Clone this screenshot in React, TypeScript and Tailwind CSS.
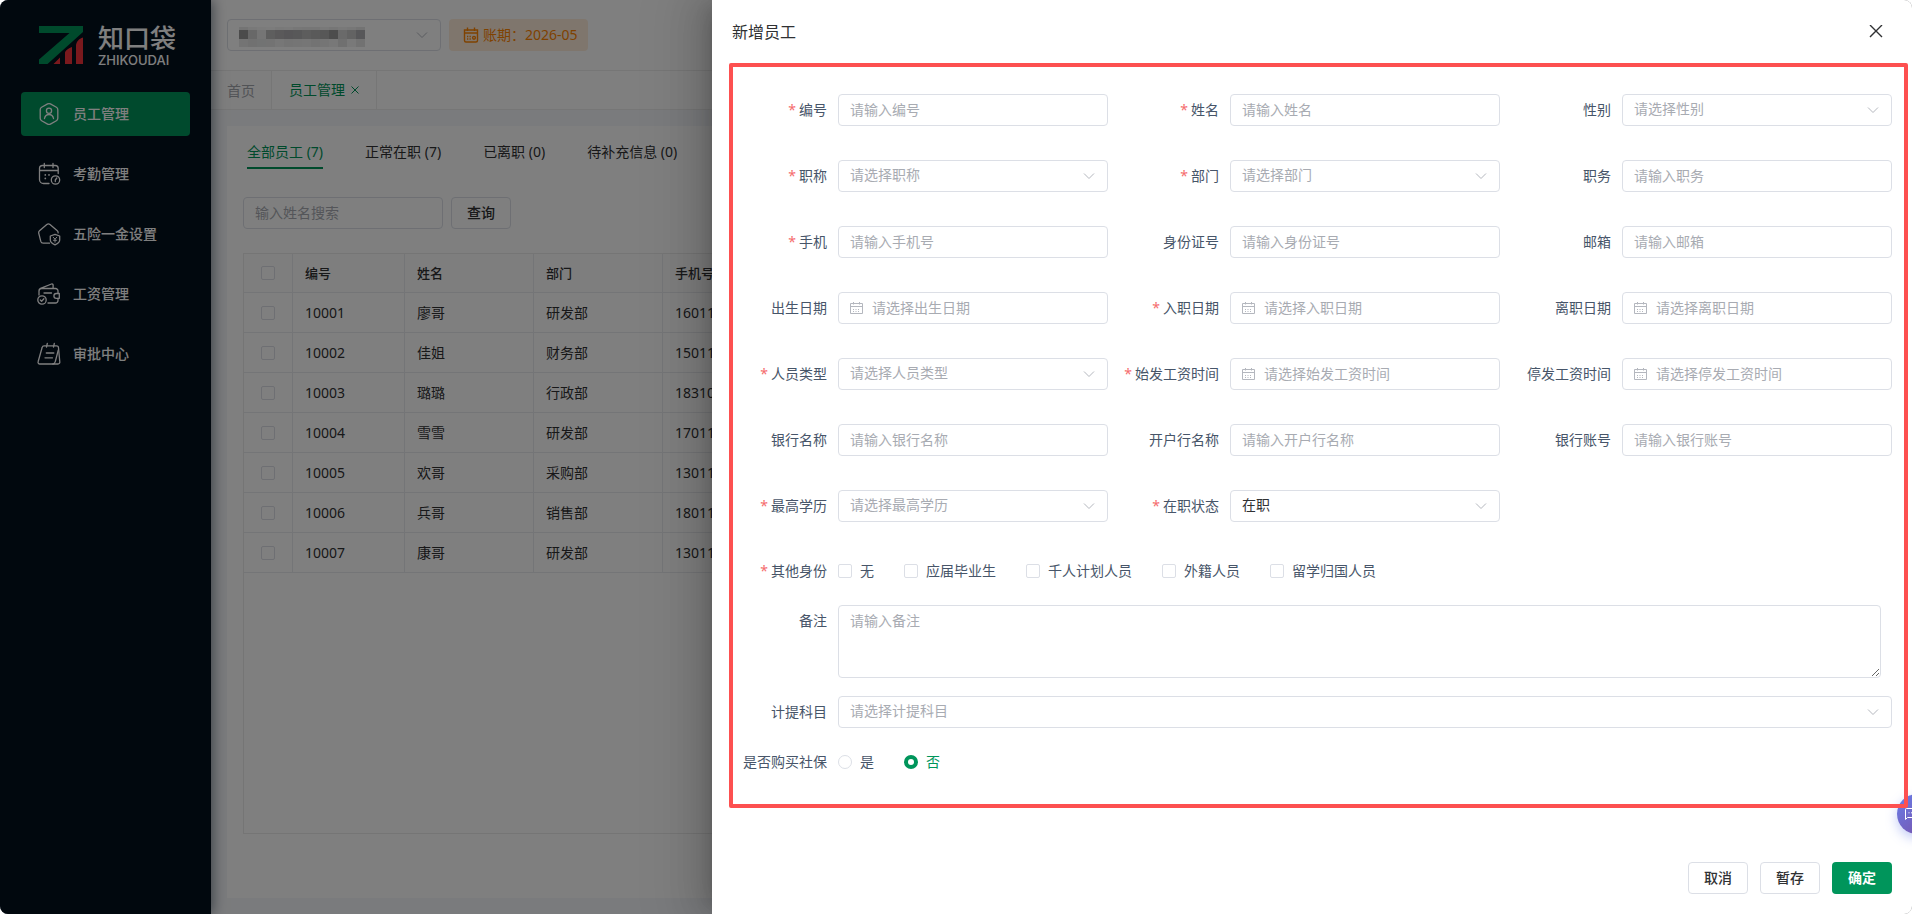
import { FC, ReactNode } from 'react';

type FieldProps = {
  id: string;
  label: string;
  type?: 'text' | 'select' | 'date';
  required?: boolean;
  placeholder?: string;
  value?: string;
};

const fields: FieldProps[] = [
  { id: 'code', label: '编号', required: true, placeholder: '请输入编号' },
  { id: 'name', label: '姓名', required: true, placeholder: '请输入姓名' },
  { id: 'gender', label: '性别', type: 'select', placeholder: '请选择性别' },
  { id: 'title', label: '职称', type: 'select', required: true, placeholder: '请选择职称' },
  { id: 'dept', label: '部门', type: 'select', required: true, placeholder: '请选择部门' },
  { id: 'duty', label: '职务', placeholder: '请输入职务' },
  { id: 'phone', label: '手机', required: true, placeholder: '请输入手机号' },
  { id: 'idCard', label: '身份证号', placeholder: '请输入身份证号' },
  { id: 'email', label: '邮箱', placeholder: '请输入邮箱' },
  { id: 'birthday', label: '出生日期', type: 'date', placeholder: '请选择出生日期' },
  { id: 'entryDate', label: '入职日期', type: 'date', required: true, placeholder: '请选择入职日期' },
  { id: 'leaveDate', label: '离职日期', type: 'date', placeholder: '请选择离职日期' },
  { id: 'staffType', label: '人员类型', type: 'select', required: true, placeholder: '请选择人员类型' },
  { id: 'payStart', label: '始发工资时间', type: 'date', required: true, placeholder: '请选择始发工资时间' },
  { id: 'payStop', label: '停发工资时间', type: 'date', placeholder: '请选择停发工资时间' },
  { id: 'bankName', label: '银行名称', placeholder: '请输入银行名称' },
  { id: 'bankBranch', label: '开户行名称', placeholder: '请输入开户行名称' },
  { id: 'bankNo', label: '银行账号', placeholder: '请输入银行账号' },
  { id: 'education', label: '最高学历', type: 'select', required: true, placeholder: '请选择最高学历' },
  { id: 'status', label: '在职状态', type: 'select', required: true, value: '在职' },
];

const identities = ['无', '应届毕业生', '千人计划人员', '外籍人员', '留学归国人员'];

const employees = [
  ['10001', '廖哥', '研发部', '16011****'],
  ['10002', '佳姐', '财务部', '15011****'],
  ['10003', '璐璐', '行政部', '18310****'],
  ['10004', '雪雪', '研发部', '17011****'],
  ['10005', '欢哥', '采购部', '13011****'],
  ['10006', '兵哥', '销售部', '18011****'],
  ['10007', '康哥', '研发部', '13011****'],
];

const statusTabs = ['全部员工 (7)', '正常在职 (7)', '已离职 (0)', '待补充信息 (0)'];

const Icon: FC<{ children: ReactNode }> = ({ children }) => (
  <svg
    className="size-6 shrink-0"
    viewBox="0 0 24 24"
    fill="none"
    stroke="currentColor"
    strokeWidth="1.3"
    strokeLinecap="round"
    strokeLinejoin="round"
    aria-hidden="true"
  >
    {children}
  </svg>
);

const menus = [
  {
    name: '员工管理',
    icon: (
      <Icon>
        <path d="M10.6 1.9a3 3 0 0 1 2.8 0l6 3.3a2.8 2.8 0 0 1 1.4 2.5v8.6a2.8 2.8 0 0 1-1.4 2.5l-6 3.3a3 3 0 0 1-2.8 0l-6-3.3a2.8 2.8 0 0 1-1.4-2.5V7.7a2.8 2.8 0 0 1 1.4-2.5z" />
        <circle cx="12" cy="8.8" r="2.6" />
        <path d="M7.500 16.500c.5-2.600 2.200-4 4.500-4s4 1.400 4.500 4" />
      </Icon>
    ),
  },
  {
    name: '考勤管理',
    icon: (
      <Icon>
        <path d="M12 21.5H6.5a4 4 0 0 1-4-4v-11a3 3 0 0 1 3-3h12.700a3 3 0 0 1 3 3v5M2.500 8.500h18.700M7.300 1.500v4M16 1.500v4" />
        <path d="M8.300 12.800v.1M12 12.800v.1M8.300 16.300v.1" strokeWidth="1.7" />
        <circle cx="18.5" cy="18" r="4.2" />
        <path d="m19.800 16-1.500 2v1.500" />
      </Icon>
    ),
  },
  {
    name: '五险一金设置',
    icon: (
      <Icon>
        <path d="M12.500 21.200H6.200a2.500 2.500 0 0 1-2.400-1.800L1.700 11.200a2.500 2.500 0 0 1 .8-2.500l7.300-6.200a2.500 2.500 0 0 1 3.200 0l7.300 6.200a2.500 2.500 0 0 1 .8 2.200" />
        <path d="m18 12.300 4.700 1.700v4c0 2.300-2.200 3.700-4.700 4.800-2.500-1.100-4.700-2.500-4.700-4.800v-4z" />
        <path d="m16.200 15.200 1.800 2 1.800-2M18 17.200v3M16.500 18.300h3" strokeWidth="1" />
      </Icon>
    ),
  },
  {
    name: '工资管理',
    icon: (
      <Icon>
        <path d="M2 13V9a2.500 2.500 0 0 1 2.500-2.500h14A2.500 2.500 0 0 1 21 9v2M21 16.500v2a2.500 2.500 0 0 1-2.500 2.500H11M3.500 6.300l11-4.300a1.200 1.200 0 0 1 1.600 1v3.300M7 11h7.500" />
        <path d="M22.300 11.500h-3a2.400 2.400 0 0 0 0 4.800h3z" />
        <circle cx="5" cy="18" r="4.2" />
        <path d="m3.300 18 1.300 1.300 2.300-2.500" />
      </Icon>
    ),
  },
  {
    name: '审批中心',
    icon: (
      <Icon>
        <path d="M7 3.800h12.500a2 2 0 0 1 2 2L22.800 20a1.800 1.800 0 0 1-1.800 2H2.800a1.700 1.700 0 0 1-1.700-2.200L5.200 5.300A2 2 0 0 1 7 3.800zM10.300 1.500 9.500 5M17.300 1.500 16.500 5M9.300 11h7.500M8 15.800h7.500" />
        <path d="m21.300 8-3 11.500a3 3 0 0 1-2.500 2.500" />
      </Icon>
    ),
  },
];

const Chevron: FC = () => (
  <svg
    className="pointer-events-none absolute top-1/2 right-3 size-3.5 -translate-y-1/2 text-[#b4b7be]"
    viewBox="0 0 14 14"
    fill="none"
    stroke="currentColor"
    aria-hidden="true"
  >
    <path d="m2 4.500 5 5 5-5" />
  </svg>
);

const Calendar: FC = () => (
  <svg
    className="pointer-events-none absolute top-1/2 left-3 size-3.5 -translate-y-1/2 text-[#b4b7be]"
    viewBox="0 0 14 14"
    fill="none"
    stroke="currentColor"
    aria-hidden="true"
  >
    <path d="M.5 2.500h12v10H.5zM.5 5.500h12M3.500 1v2.500M9.500 1v2.500" />
    <path d="M3 8.500h7M3 10.500h7" strokeDasharray="1 1.500" />
  </svg>
);

const controlClass =
  'block h-8 w-full appearance-none rounded border border-[#dcdfe6] bg-white px-[11px] pb-0.5 text-sm outline-none placeholder:text-[#a8abb2] placeholder:opacity-100';

const checkClass =
  'block size-3.5 shrink-0 appearance-none rounded-xs border border-[#dcdfe6] bg-white';

const FieldLabel: FC<{ id?: string; label: string; required?: boolean }> = ({
  id,
  label,
  required,
}) => (
  <label
    htmlFor={id}
    className="h-8 w-[122px] shrink-0 pr-[11px] text-right leading-8 whitespace-nowrap text-[#475569]"
  >
    {required && <span className="mr-[3px] text-[#f56c6c]">*</span>}
    {label}
  </label>
);

const Control: FC<FieldProps> = ({ id, type = 'text', placeholder, value }) => {
  if (type === 'select') {
    return (
      <div className="relative min-w-0 flex-1">
        <select
          id={id}
          className={`${controlClass} ${value ? 'text-[#303133]' : 'text-[#a8abb2]'}`}
        >
          <option>{value || placeholder}</option>
        </select>
        <Chevron />
      </div>
    );
  }
  if (type === 'date') {
    return (
      <div className="relative min-w-0 flex-1">
        <input id={id} type="text" placeholder={placeholder} className={`${controlClass} pl-[33px]`} />
        <Calendar />
      </div>
    );
  }
  return (
    <div className="min-w-0 flex-1">
      <input id={id} type="text" placeholder={placeholder} className={controlClass} />
    </div>
  );
};

const maskTop = ['#e8e8e8', '#f2f2f2', '#f6f6f6', '#f8f8f8', '#f3f3f3', '#f4f4f4', '#eeeeee', '#ececec', '#ededed', '#f2f2f2', '#ececec', '#f2f2f2', '#eeeeee', '#e6e6e6'];
const maskMiddle = ['#969696', '#d0d0d0', '#eaeaea', '#bcbcbc', '#b4b2b4', '#aeacb0', '#b0b0b2', '#bababa', '#b4b4b4', '#aeaeae', '#9a9a9a', '#d4d4d4', '#c6c6c6', '#aeaeb2'];
const maskBottom = ['#e8e8e8', '#e2e2e2', '#e4e6e6', '#e6e6e6', '#eeeeee', '#e8e8e8', '#eaeaea', '#ececec', '#e6e6e6', '#eaeaea', '#f0f0f0', '#e0e0e0', '#f2f2f2', '#e4e4e4'];

// company name is masked
const Mask: FC = () => (
  <svg className="pointer-events-none absolute top-2 left-3" width="127" height="20" aria-hidden="true">
    {maskTop.map((c, i) => (
      <rect key={i} x={i * 9} y="0" width="9" height="3" fill={c} />
    ))}
    {maskMiddle.map((c, i) => (
      <rect key={i} x={i * 9} y="3" width="9" height="9" fill={c} />
    ))}
    {maskBottom.map((c, i) => (
      <rect key={i} x={i * 9} y="12" width="9" height="8" fill={c} />
    ))}
  </svg>
);

const Sidebar: FC = () => (
  <aside className="relative z-10 w-[211px] shrink-0 bg-[#03101d] text-white shadow-[2px_0_12px_rgba(0,21,41,0.5)]">
    <div className="flex h-[92px] items-start gap-[15px] pt-[26px] pl-[39px]">
      <svg className="h-[38px] w-11 shrink-0" viewBox="0 0 44 38" aria-hidden="true">
        <path fill="#009459" d="M0 0h44v6L8.500 38H0v-4.500L30.500 7H0z" />
        <path fill="#f5333b" d="M14.500 38 21 31.500V38zM26 38V27c0-2.500 4-5 7-6v17zM37 38V20c0-4 3-7.500 7-8.500V38z" />
      </svg>
      <div>
        <p className="text-[26px] leading-6 font-medium">知口袋</p>
        <p className="mt-1 font-['Inter'] text-[13px] leading-3 font-medium">ZHIKOUDAI</p>
      </div>
    </div>
    <nav className="flex flex-col gap-4 px-[21px]">
      {menus.map((menu, index) => (
        <a
          key={menu.name}
          href="#"
          className={`flex h-11 items-center gap-3 rounded pl-4 font-medium ${index === 0 ? 'bg-[#00955b]' : ''}`}
        >
          {menu.icon}
          {menu.name}
        </a>
      ))}
    </nav>
  </aside>
);

const EmployeeTable: FC = () => (
  <div className="mt-6 flex-1 overflow-hidden border border-[#ebebeb]">
    <table className="-mt-px -ml-px w-full table-fixed border-collapse text-left text-[#303133]">
      <colgroup>
        <col className="w-[49px]" />
        <col className="w-28" />
        <col className="w-[129px]" />
        <col className="w-[129px]" />
        <col />
      </colgroup>
      <thead>
        <tr className="h-[39px] bg-[#fcfcfd]">
          <th className="border border-[#e8eaee]">
            <input type="checkbox" aria-label="全选" className={`${checkClass} mx-auto`} />
          </th>
          {['编号', '姓名', '部门', '手机号'].map((head) => (
            <th key={head} className="border border-[#e8eaee] px-3 text-[13px] font-medium">
              {head}
            </th>
          ))}
        </tr>
      </thead>
      <tbody>
        {employees.map((row) => (
          <tr key={row[0]} className="h-10">
            <td className="border border-[#e8eaee]">
              <input type="checkbox" aria-label={row[1]} className={`${checkClass} mx-auto`} />
            </td>
            {row.map((cell) => (
              <td key={cell} className="border border-[#e8eaee] px-3">
                {cell}
              </td>
            ))}
          </tr>
        ))}
      </tbody>
    </table>
  </div>
);

const EmployeePage: FC = () => (
  <div className="flex min-w-0 flex-1 flex-col bg-[#f5f7fa]">
    <header className="flex h-[70px] shrink-0 items-start gap-2 bg-white pt-[19px] pl-4">
      <div className="relative w-[214px]">
        <select aria-label="公司" className={controlClass} />
        <Mask />
        <Chevron />
      </div>
      <div className="flex h-8 items-center gap-1 rounded bg-[#ffeddb] pr-[10px] pl-[14px] text-[#ff8400]">
        <svg className="size-4" viewBox="0 0 16 16" fill="none" stroke="currentColor" strokeWidth="1.4" aria-hidden="true">
          <path d="M1.500 3h13v3h-13zM1.500 6v7.500a1.500 1.500 0 0 0 1.500 1.500h10a1.500 1.500 0 0 0 1.500-1.500V6M4.500.5V4M11.500.5V4" />
          <path d="M4 9.500h4.500M4 12h4.500" strokeDasharray="1.3 1.2" />
          <circle cx="11" cy="10.8" r="1.4" />
        </svg>
        账期：2026-05
      </div>
    </header>
    <div className="flex h-10 shrink-0 border-y border-[#ececec] bg-white leading-10">
      <a href="#" className="border-r border-[#ececec] bg-[#fcfcfc] px-4 text-[#a3a6ad]">
        首页
      </a>
      <div className="flex items-center gap-[6px] border-r border-[#ececec] bg-white px-[17px] text-[#009459]">
        <a href="#">员工管理</a>
        <button type="button" aria-label="关闭标签">
          <svg className="size-2" viewBox="0 0 8 8" stroke="currentColor" aria-hidden="true">
            <path d="m.5.5 7 7M7.500.5l-7 7" />
          </svg>
        </button>
      </div>
    </div>
    <main className="mt-4 mb-4 ml-4 flex flex-1 flex-col bg-white px-4 pt-3 pb-16">
      <div className="flex gap-[42px] px-1">
        {statusTabs.map((tab, index) => (
          <button
            key={tab}
            type="button"
            className={`h-[31px] border-b-2 pb-0.5 ${
              index === 0 ? 'border-[#009459] text-[#009459]' : 'border-transparent text-[#303133]'
            }`}
          >
            {tab}
          </button>
        ))}
      </div>
      <div className="mt-7 flex gap-2">
        <div className="w-[200px]">
          <input type="text" aria-label="姓名搜索" placeholder="输入姓名搜索" className={controlClass} />
        </div>
        <button type="button" className="h-8 w-[60px] rounded border border-[#dcdfe6] font-medium text-[#303133]">
          查询
        </button>
      </div>
      <EmployeeTable />
    </main>
  </div>
);

const EmployeeForm: FC = () => (
  <form className="relative pt-[30px] pr-5 pb-[30px] pl-1">
    <div className="grid grid-cols-3 gap-y-[34px]">
      {fields.map((field) => (
        <div key={field.id} className="flex">
          <FieldLabel id={field.id} label={field.label} required={field.required} />
          <Control {...field} />
        </div>
      ))}
    </div>

    <div className="mt-[33px] flex">
      <FieldLabel label="其他身份" required />
      <div className="flex h-8 items-center gap-[30px] text-[#475569]">
        {identities.map((item) => (
          <label key={item} className="flex items-center gap-2">
            <input type="checkbox" className={checkClass} />
            {item}
          </label>
        ))}
      </div>
    </div>

    <div className="mt-[18px] flex">
      <FieldLabel id="remark" label="备注" />
      <textarea
        id="remark"
        placeholder="请输入备注"
        className="mr-[11px] block h-[73px] flex-1 rounded border border-[#dcdfe6] px-[11px] py-[5px] leading-5 outline-none placeholder:text-[#a8abb2]"
      />
    </div>

    <div className="mt-[18px] flex">
      <FieldLabel id="subject" label="计提科目" />
      <Control id="subject" label="计提科目" type="select" placeholder="请选择计提科目" />
    </div>

    <div className="mt-[18px] flex">
      <FieldLabel label="是否购买社保" />
      <div className="flex h-8 items-center gap-[30px]">
        <label className="flex items-center gap-2 text-[#475569]">
          <input
            type="radio"
            name="insurance"
            className="size-3.5 appearance-none rounded-full border border-[#dcdfe6]"
          />
          是
        </label>
        <label className="flex items-center gap-2 text-[#00955b]">
          <input
            type="radio"
            name="insurance"
            defaultChecked
            className="size-3.5 appearance-none rounded-full border-4 border-[#00955b]"
          />
          否
        </label>
      </div>
    </div>

    <div className="pointer-events-none absolute -top-px right-1 bottom-0 left-[17px] z-20 rounded-xs border-4 border-[#fd5050]" />
  </form>
);

const App: FC = () => {
  return (
    <div className="relative flex h-screen min-h-[860px] overflow-hidden rounded-lg bg-white font-['Noto_Sans','Noto_Sans_CJK_SC',sans-serif] text-sm">
      <Sidebar />
      <EmployeePage />

      <div className="absolute inset-0 z-20 flex justify-end bg-black/50">
        <section
          role="dialog"
          aria-label="新增员工"
          className="relative flex w-[1200px] max-w-full flex-col bg-white shadow-[-16px_0_48px_16px_rgba(0,0,0,0.08),-12px_0_32px_rgba(0,0,0,0.12),-8px_0_16px_-8px_rgba(0,0,0,0.16)]"
        >
          <div className="flex h-16 shrink-0 items-center justify-between px-5">
            <h2 className="text-base text-[#303133]">新增员工</h2>
            <button type="button" aria-label="关闭" className="flex size-8 items-center justify-center text-[#303133]">
              <svg className="size-3.5" viewBox="0 0 14 14" stroke="currentColor" strokeWidth="1.4" aria-hidden="true">
                <path d="m1 0 12 12M13 0 1 12" />
              </svg>
            </button>
          </div>

          <EmployeeForm />

          <div className="mt-auto flex justify-end gap-3 p-5 font-medium">
            <button type="button" className="h-8 w-[60px] rounded border border-[#dcdfe6] text-[#303133]">
              取消
            </button>
            <button type="button" className="h-8 w-[60px] rounded border border-[#dcdfe6] text-[#303133]">
              暂存
            </button>
            <button type="button" className="h-8 w-[60px] rounded bg-[#00955b] font-bold text-white">
              确定
            </button>
          </div>

          <button
            type="button"
            aria-label="在线客服"
            className="absolute -right-[25px] bottom-20 z-10 flex size-10 items-center rounded-full bg-linear-135 from-[#667eea] to-[#764ba2] pl-2 text-white shadow-[0_4px_12px_rgba(102,126,234,0.4)]"
          >
            <svg className="size-4" viewBox="0 0 16 16" fill="none" stroke="currentColor" aria-hidden="true">
              <path d="M.5 3.500a1 1 0 0 1 1-1h13v9h-12l-2 2zM3.500 6.800h1M6 6.800h1" />
            </svg>
          </button>
        </section>
      </div>
    </div>
  );
};

export default App;
